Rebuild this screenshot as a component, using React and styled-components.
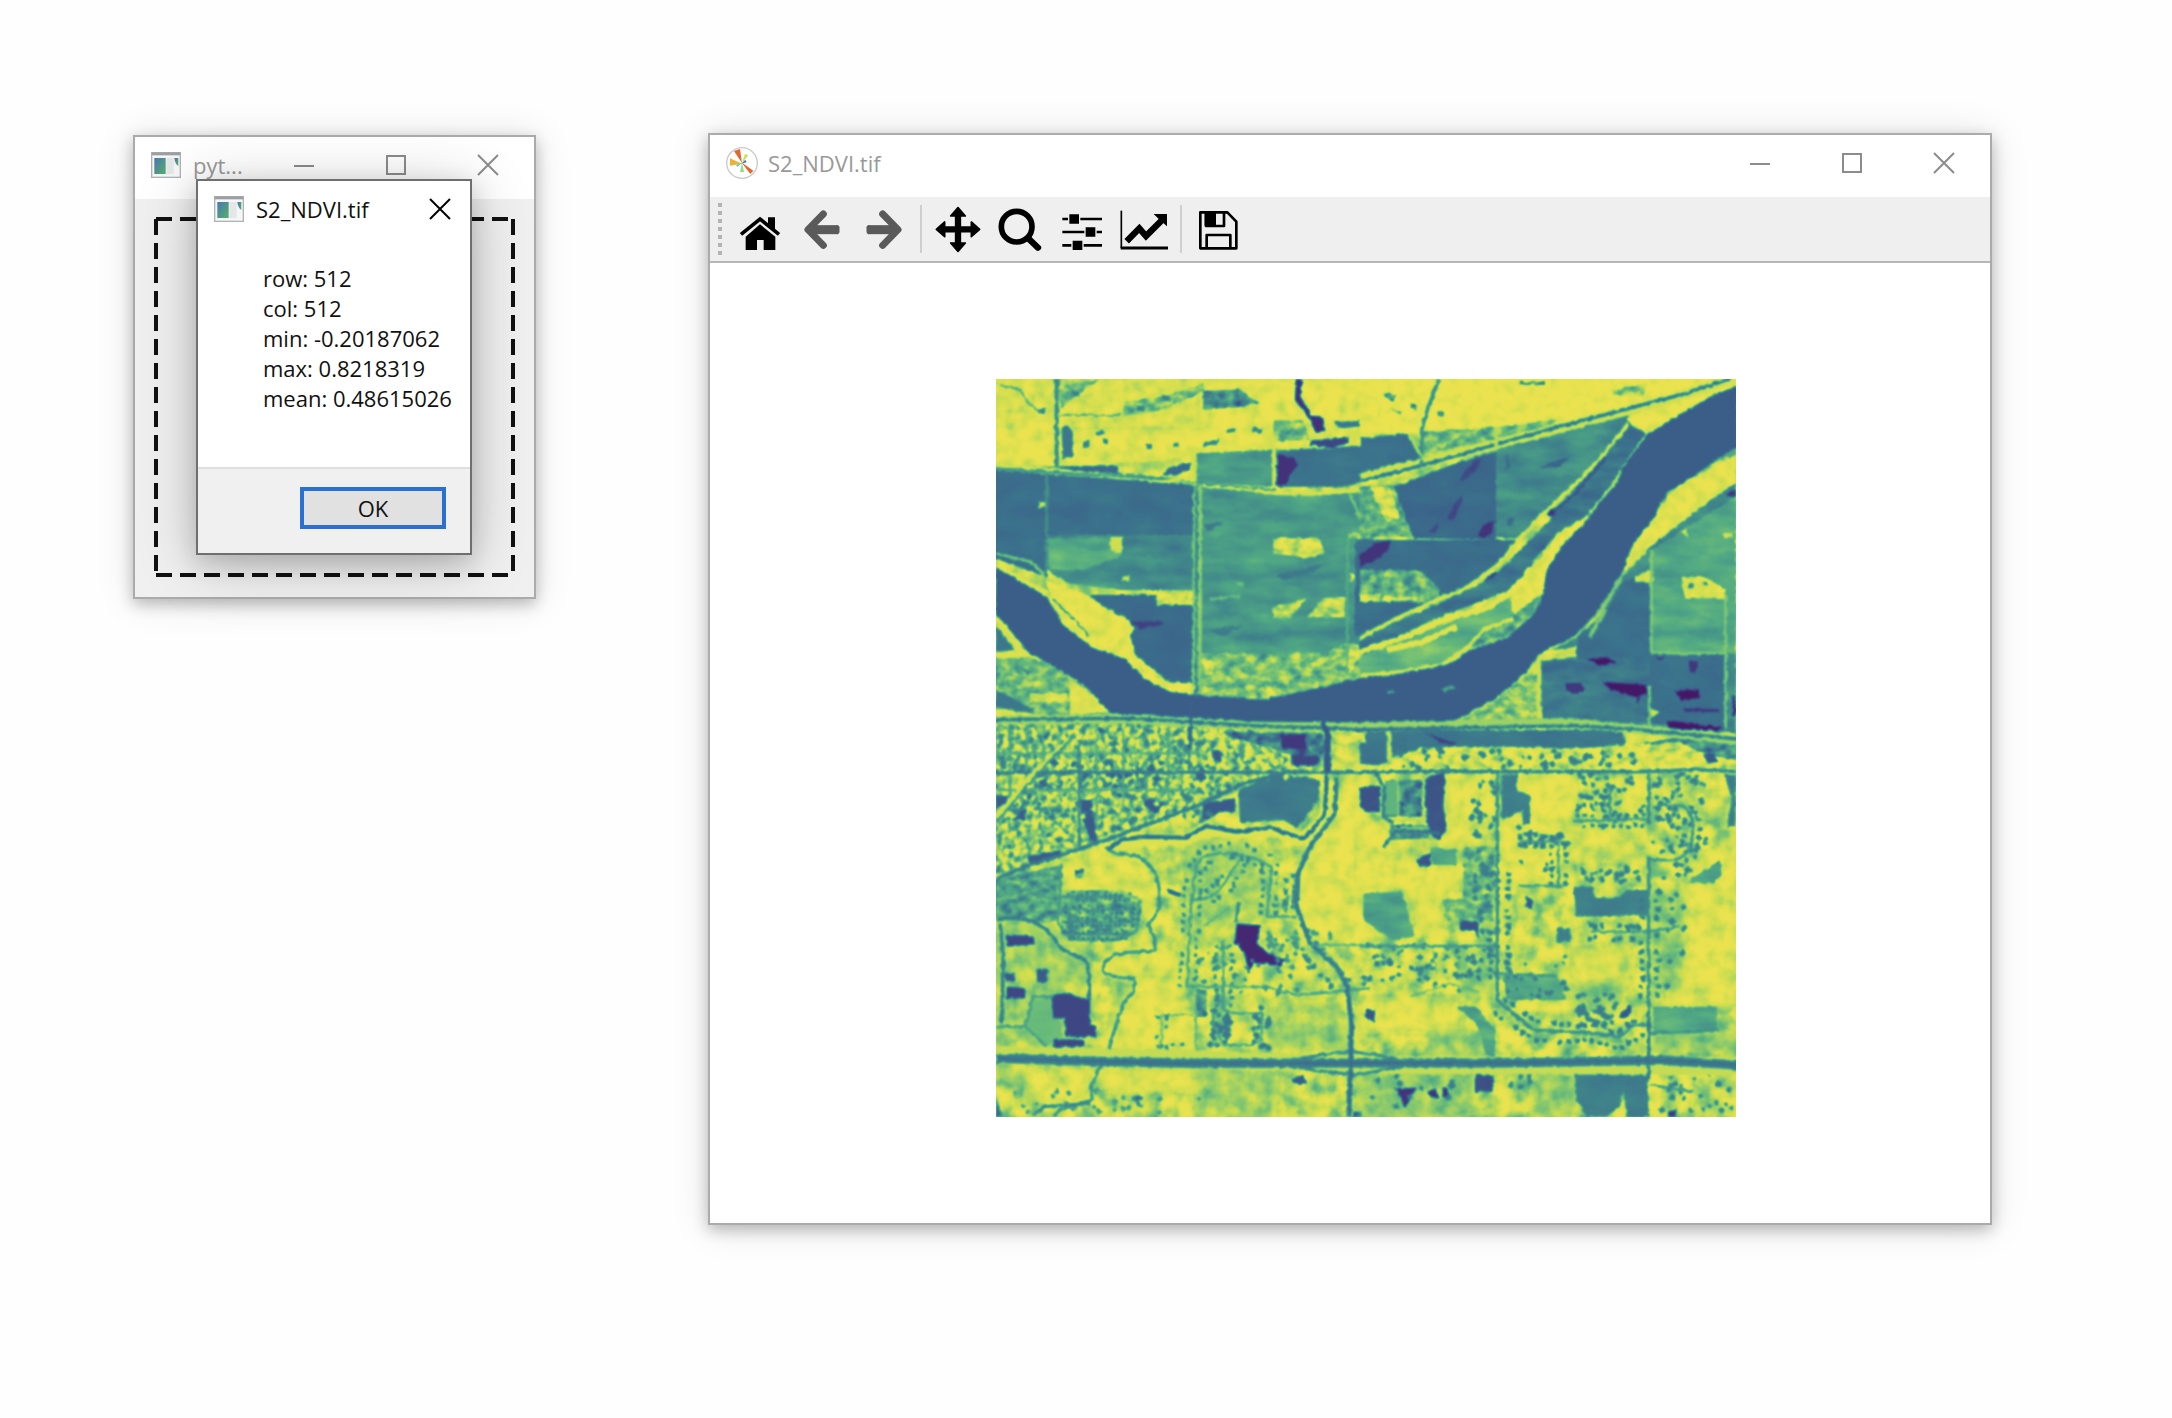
import React from "react";
import styled, { createGlobalStyle } from "styled-components";

const GlobalStyle = createGlobalStyle`
  *, *::before, *::after { box-sizing: border-box; }
  html, body { margin: 0; background: #fefefe; }
  body, button { font-family: "Open Sans", "Noto Sans", sans-serif; font-size: 22px; }
`;

/* ---------- window chrome ---------- */

const Desktop = styled.main`
  position: relative;
  min-height: 100vh;
  overflow: hidden;
`;

const Window = styled.section`
  position: absolute;
  display: flex;
  flex-direction: column;
  background: #fff;
  border: 2px solid ${(p) => (p.$active ? "#6f6f6f" : "#ababab")};
  box-shadow: ${(p) =>
    p.$active
      ? "0 8px 24px rgba(0, 0, 0, 0.18), 0 8px 60px rgba(0, 0, 0, 0.2)"
      : "0 5px 14px rgba(0, 0, 0, 0.24), 0 2px 36px rgba(0, 0, 0, 0.12)"};
`;

const DropWindow = styled(Window)`
  left: 133px;
  top: 135px;
  width: 403px;
  background: #f0f0f0;
`;

const FigureWindow = styled(Window)`
  left: 708px;
  right: 180px;
  top: 133px;
`;

const StatsDialog = styled(Window)`
  left: 196px;
  top: 179px;
  width: 276px;
`;

const TitleBar = styled.header`
  display: flex;
  align-items: center;
  height: 62px;
  padding: 0 0 6px 16px;
  background: #fff;
`;

const Title = styled.h1`
  flex: 1;
  min-width: 0;
  margin: 0 0 0 ${(p) => p.$gap}px;
  font-size: 22px;
  font-weight: 400;
  line-height: 30px;
  white-space: nowrap;
  color: ${(p) => (p.$active ? "#111" : "#999")};
`;

const ControlButton = styled.button`
  display: flex;
  align-items: center;
  justify-content: center;
  width: ${(p) => p.$width || 92}px;
  height: 56px;
  padding: 0;
  border: 0;
  background: transparent;
  color: ${(p) => (p.$active ? "#000" : "#8c8c8c")};
`;

const glyphs = {
  Minimize: "M0 11H20",
  Maximize: "M1 1H19V19H1Z",
  Close: "M0 0L20 20M20 0L0 20",
};

function Control({ name, active, width }) {
  return (
    <ControlButton type="button" aria-label={name} $active={active} $width={width}>
      <svg width="20" height="20" viewBox="0 0 20 20" overflow="visible">
        <path d={glyphs[name]} fill="none" stroke="currentColor" strokeWidth="2" />
      </svg>
    </ControlButton>
  );
}

function AppIcon() {
  return (
    <svg width="30" height="26" viewBox="0 0 90 78" aria-hidden="true">
      <defs>
        <linearGradient id="pane" x1="0" y1="0" x2="1" y2="1">
          <stop offset="0" stopColor="#4a78b0" />
          <stop offset="1" stopColor="#55b06a" />
        </linearGradient>
      </defs>
      <rect x="2" y="2" width="86" height="74" fill="#f6f6f6" stroke="#b0b3b6" strokeWidth="4" />
      <rect x="2" y="1" width="86" height="9" fill="#9ba0a5" />
      <rect x="10" y="18" width="34" height="48" fill="url(#pane)" />
      <rect x="46" y="18" width="22" height="48" fill="#e4e6e8" />
      <path d="M70 18H82V42Q72 36 70 18Z" fill="url(#pane)" />
    </svg>
  );
}

function PlotIcon() {
  return (
    <svg width="32" height="32" viewBox="0 0 96 96" aria-hidden="true">
      <circle cx="48" cy="48" r="46" fill="#fff" stroke="#c9c9c9" strokeWidth="4" />
      <path d="M48 48L24 12L42 6Z" fill="#e2672c" />
      <path d="M48 50L12 34V56Z" fill="#e9b33a" />
      <path d="M46 46L82 71L73 81Z" fill="#e2672c" />
      <path d="M48 48L57 20L67 25Z" fill="#c3e35a" />
      <path d="M48 48L42 75H54Z" fill="#8be084" />
      <path d="M48 48L30 54L34 60Z" fill="#63c9c0" />
      <path d="M46 50L58 38L62 46Z" fill="#5577a8" />
    </svg>
  );
}

/* ---------- drop window ---------- */

const DropArea = styled.div`
  padding: 18px 19px 20px;
`;

const DropFrame = styled.div`
  --h: repeating-linear-gradient(90deg, #111 0 16px, transparent 16px 24px);
  --v: repeating-linear-gradient(180deg, #111 0 16px, transparent 16px 24px);
  height: 360px;
  background:
    var(--h) 2px 0 / calc(100% - 2px) 4px no-repeat,
    var(--h) 2px 100% / calc(100% - 2px) 4px no-repeat,
    var(--v) 0 2px / 4px calc(100% - 4px) no-repeat,
    var(--v) 100% 2px / 4px calc(100% - 4px) no-repeat;
`;

/* ---------- dialog ---------- */

const Stats = styled.div`
  padding: 20px 0 54px 65px;
  line-height: 30px;
  color: #111;
  white-space: nowrap;
`;

const StatLine = styled.p`
  margin: 0;
`;

const DialogFooter = styled.footer`
  display: flex;
  justify-content: flex-end;
  padding: 18px 24px 24px;
  border-top: 2px solid #dfdfdf;
  background: #f0f0f0;
`;

const OkButton = styled.button`
  width: 146px;
  height: 42px;
  padding: 0;
  border: 4px solid #2a70d0;
  background: #e1e1e1;
  color: #111;
  line-height: 30px;
`;

/* ---------- toolbar ---------- */

const Toolbar = styled.div`
  display: flex;
  align-items: center;
  height: 66px;
  padding-left: 8px;
  border-bottom: 2px solid #b6b6b6;
  background: #efefef;
`;

const Grip = styled.span`
  width: 4px;
  height: 52px;
  margin-right: 7px;
  background: repeating-linear-gradient(180deg, #b4b4b4 0 4px, transparent 4px 8px);
`;

const ToolButton = styled.button`
  display: flex;
  justify-content: center;
  width: 62px;
  padding: 0;
  border: 0;
  background: transparent;
  color: ${(p) => (p.disabled ? "#5a5a5a" : "#000")};
`;

const Separator = styled.span`
  width: 2px;
  height: 48px;
  margin: 0 5px;
  background: #cfcfcf;
`;

const arrow = (
  <g fill="none" stroke="currentColor" strokeLinecap="round" strokeLinejoin="round">
    <path d="M76 27L30 74L76 121" strokeWidth="21" />
    <path d="M42 74H120" strokeWidth="27" strokeLinecap="butt" />
    <path d="M118 67V81" strokeWidth="13" />
  </g>
);

const toolIcons = {
  Home: (
    <g fill="currentColor">
      <path d="M29 95L72 58L118 95V135H83V105H63V135H29Z" />
      <path d="M15 87L72 41L129 87" fill="none" stroke="#efefef" strokeWidth="18" />
      <path d="M96 37H117V74L96 57Z" />
      <path d="M15 88L72 42L129 88" fill="none" stroke="currentColor" strokeWidth="11" />
    </g>
  ),
  Back: arrow,
  Forward: <g transform="translate(144 0) scale(-1 1)">{arrow}</g>,
  Pan: (
    <g fill="currentColor" stroke="currentColor" strokeLinejoin="round" strokeWidth="5">
      <path d="M72 8L94 33H79V66H112V51L137 73L112 95V80H79V114H94L72 139L50 114H65V80H32V95L7 73L32 51V66H65V33H50Z" />
    </g>
  ),
  Zoom: (
    <g fill="none" stroke="currentColor" strokeLinecap="round">
      <circle cx="62" cy="65" r="46" strokeWidth="17" />
      <path d="M98 101L126 128" strokeWidth="19" />
    </g>
  ),
  Subplots: (
    <g fill="currentColor">
      <path d="M13 38H30V46H13ZM67 38H132V46H67ZM13 77H79V85H13ZM116 77H132V85H116ZM13 117H40V125H13ZM77 117H132V125H77Z" />
      <path d="M34 28H63V56H34ZM83 67H112V95H83ZM44 107H73V135H44Z" />
    </g>
  ),
  Customize: (
    <g fill="none" stroke="currentColor">
      <path d="M4 17V129" strokeWidth="5" />
      <path d="M2 129H144" strokeWidth="9" />
      <path d="M20 109L58 70L78 93L124 47" strokeWidth="19" />
      <path d="M101 27H141V64L130 54L114 40Z" fill="currentColor" stroke="none" />
    </g>
  ),
  Save: (
    <g fill="none" stroke="currentColor" strokeWidth="8" strokeLinejoin="round">
      <path d="M19 22H100L127 50V130H19Z" />
      <path d="M36 22V63H90V22" />
      <path d="M36 22H62V60H36Z" fill="currentColor" />
      <path d="M38 130V90H109V130" />
    </g>
  ),
};

function Tool({ name, disabled }) {
  return (
    <ToolButton type="button" aria-label={name} disabled={disabled}>
      <svg width="48" height="48" viewBox="0 0 144 144">
        {toolIcons[name]}
      </svg>
    </ToolButton>
  );
}

/* ---------- raster ---------- */

const Canvas = styled.div`
  display: flex;
  justify-content: center;
  padding: 116px 0 106px 32px;
`;

const RasterSvg = styled.svg`
  display: block;
  width: 740px;
  max-width: 100%;
  height: auto;
`;

// Grey level for an index value between 0 and 1; the colour map is applied to the whole scene.
const g = (v) => {
  const n = Math.round(v * 255);
  return `rgb(${n},${n},${n})`;
};

const random = (seed) => () => {
  seed = (seed * 16807) % 2147483647;
  return seed / 2147483647;
};

// Small blobs (houses, trees) spread over a rectangle.
function scatter(seed, count, x, y, w, h, size) {
  const next = random(seed * 7919 + 13);
  let d = "";
  for (let i = 0; i < count; i++) {
    const px = Math.round(x + next() * w);
    const py = Math.round(y + next() * h);
    const a = Math.round(size * (0.6 + next() * 0.9));
    const b = Math.round(size * (0.5 + next() * 0.7));
    d += `M${px} ${py}l${a} ${-b}l${b} ${a}l${-a} ${b}Z`;
  }
  return d;
}

// Houses along both sides of a street given as points.
function street(seed, points, step = 24, off = 17, size = 10) {
  const next = random(seed * 104729 + 7);
  let d = "";
  for (let i = 0; i < points.length - 1; i++) {
    const [x1, y1] = points[i];
    const [x2, y2] = points[i + 1];
    const len = Math.hypot(x2 - x1, y2 - y1);
    const ux = (x2 - x1) / len;
    const uy = (y2 - y1) / len;
    for (let t = 0; t < len; t += step) {
      for (const side of [-1, 1]) {
        if (next() < 0.18) continue;
        const o = side * (off + next() * 8);
        const px = Math.round(x1 + ux * t - uy * o - size / 2);
        const py = Math.round(y1 + uy * t + ux * o - size / 2);
        d += `M${px} ${py}h${Math.round(size * (0.8 + next() * 0.7))}v${Math.round(size * (0.8 + next() * 0.6))}h${-size}Z`;
      }
    }
  }
  return d;
}

function Area({ v, d, rough }) {
  return <path d={d} fill={g(v)} filter={rough ? `url(#${rough})` : undefined} />;
}

function Line({ v, d, w = 8 }) {
  return <path d={d} fill="none" stroke={g(v)} strokeWidth={w} strokeLinejoin="round" />;
}

function Noise({ id, freq, k, seed, octaves = 3, soft = 0 }) {
  return (
    <filter id={id} x="-0.05" y="-0.05" width="1.1" height="1.1" colorInterpolationFilters="sRGB">
      <feTurbulence type="fractalNoise" baseFrequency={freq} numOctaves={octaves} seed={seed} />
      <feColorMatrix values="1 0 0 0 0 1 0 0 0 0 1 0 0 0 0 0 0 0 0 1" result="n" />
      <feFlood floodColor="#000" result="black" />
      <feColorMatrix in="SourceGraphic" values="1 0 0 0 0 0 1 0 0 0 0 0 1 0 0 0 0 0 0 1" result="s" />
      <feMorphology in="SourceGraphic" operator="dilate" radius="12" result="wide" />
      <feComposite in="wide" in2="n" operator="arithmetic" k2="1" k3={k} k4={-k / 2} />
      <feColorMatrix values="1 0 0 0 0 0 1 0 0 0 0 0 1 0 0 0 0 0 0 1" result="t" />
      <feGaussianBlur in="SourceAlpha" stdDeviation={soft} result="mask" />
      <feComposite in="t" in2="mask" operator="in" />
    </filter>
  );
}

function NorthWest() {
  return (
    <g transform="translate(-18 -27)">
      <Area v={0.93} d="M0 20H1150V240L860 235L440 275L200 290L0 280Z" rough="grass" />
      <Area v={0.98} d="M200 190H840V225L600 250L400 270L230 285Z M0 140H190V275L0 270Z M640 30H1140V150H850L640 200Z" rough="lawn" />
      <Area v={0.7} d="M200 30L330 30L260 75L215 120Z M400 95L520 80L640 40V65L520 120L400 140Z M850 150H940L960 210L850 215Z" rough="mottle" />
      <Area v={0.52} d="M640 62L750 58L810 100L740 112L640 120Z" rough="mottle" />
      <Area v={0.42} d="M215 170L235 165L248 190V265H218Z" />
      <Area v={0.45} d="M245 60l20 5l5 14l-20 -3Z M315 185l20-6l8 12l-22 8Z M336 205l18 2l0 16l-18 0Z M280 215l18-4l0 18l-20 6Z M468 222h18v15h-18Z M550 218h16v12h-16Z M790 172l24 4l0 14l-24-4Z M712 178l26-3l-4 10l-22 4Z M140 115h25v15h-20Z M440 108h24v16h-24Z M515 75l24 4l-4 14l-18-2Z M640 215l50-8l-10 16l-40 6Z" />
      <Line v={0.6} d="M30 45L90 60L120 105L150 122M210 135H390" w={6} />
      <Line v={0.48} d="M200 27V290" w={12} />
      <Area v={0.12} d="M918 27L938 30L930 80L965 135L1000 145L1005 185L978 188L955 140L915 90Z" />
      <Area v={0.22} d="M960 212L1076 202V218L1030 232L960 226Z" />
      <Area v={0.42} d="M1030 155L1122 153V168L1050 175Z" />

      <Area v={0.55} d="M0 290H380V305L620 335V250L860 238V350L640 340L0 300Z" rough="field" />
      <Area v={0.36} d="M205 290L385 285V308L220 300Z M515 315L540 290L600 278V300L560 315Z" />
      <Area v={0.4} d="M860 242L1150 225V330L1060 350H860Z" rough="calm" />
      <Area v={0.13} d="M862 250L910 265L925 285L905 305L885 345H862Z" />
      <Area v={0.39} d="M0 300L620 345V520H170V620L0 560Z" rough="calm" />
      <Area v={0.5} d="M170 495H620V660H390L240 640L170 600Z" rough="field" />
      <Area v={0.63} d="M170 505H390V560L280 600H180Z" rough="field" />
      <Area v={0.9} d="M362 500H396V552L360 540Z M145 396H168V412H145Z M395 616H418V634H395Z" />
      <Area v={0.55} d="M635 345L850 370H1150V1000H635Z" rough="field" />
      <Area v={0.37} d="M300 675H500V705H612V940L540 940L430 850L380 750Z" rough="calm" />
      <Area v={0.2} d="M420 755L510 752L525 764L450 778Z" />
      <Area v={0.93} d="M502 670H618V705H502Z M850 505L985 505L1005 545L960 565L850 550Z M1075 490H1140V503H1075Z M1080 610H1112V632H1080Z" rough="mottle" />
      <Area v={0.84} d="M1000 685L1065 680V742H950Z M850 712L950 685L900 748L850 745Z" rough="mottle" />
      <Area v={0.42} d="M860 615L1010 580L960 610L880 630Z M650 780L760 765L700 800Z M640 465L700 455L650 490Z" rough="calm" />
      <Area v={0.7} d="M740 635h20v14h-20Z M660 685l90-12v8l-90 12Z" />
      <Area v={0.72} d="M625 850L1000 850L1070 820L1140 825V920L1000 955L820 990H620Z" rough="mottle" />
      <Area v={0.92} d="M640 870L672 880L668 915L645 915Z M800 960L830 940L860 975L820 985Z M960 880L1060 835L1060 855L970 895Z M1065 820L1140 830L1110 850L1080 910Z" rough="mottle" />

      <Area v={0.97} d="M170 635L290 675L320 700L410 745L435 775L420 790L435 855L500 925L600 945V975L540 965L460 925L400 865L310 835L215 760Z" rough="grass" />
      <Line v={0.5} d="M190 690L250 745L300 800" w={6} />
      <Area v={0.7} d="M0 860L100 850L190 890L280 950L360 1030L0 1050Z" rough="mottle" />
      <Area v={0.93} d="M240 930L290 960L360 1025L240 1035Z M0 1015L120 1030L240 1040L0 1050Z M120 970H230V995H120Z" rough="grass" />
      <Area v={0.42} d="M18 960L60 980L130 1020L90 1025L18 1010Z M95 895L125 905L110 915Z M18 770L75 840L18 845Z" />

      <Line v={0.92} d="M0 287L210 300L520 335L600 325" w={9} />
      <Line v={0.9} d="M385 285L405 315M612 255V325M852 240V350" w={12} />
      <Line v={0.92} d="M630 345L780 358L860 370L960 372L1060 365L1140 345" w={11} />
      <Line v={0.5} d="M620 340L860 360M0 293L520 328" w={5} />
      <Line v={0.52} d="M170 310V600" w={9} />
      <Line v={0.76} d="M613 345L610 950M631 345L628 975" w={8} />
      <Line v={0.45} d="M622 345L618 975" w={7} />
      <Line v={0.75} d="M18 550L120 575L160 610L170 650M1078 370L1115 455" w={9} />
      <Line v={0.64} d="M1072 500V910" w={7} />
      <Line v={0.95} d="M18 735L60 780L90 840L150 865M18 858L110 852M18 592L170 670" w={16} />
    </g>
  );
}

function NorthEast() {
  return (
    <g transform="translate(1092 -27)">
      <Area v={1} d="M0 20H1150V60L800 130L400 190H0Z" rough="grass" />
      <Area v={0.5} d="M70 65L110 75L100 95L75 85Z M232 124h20v15h-20Z M85 115l40 10l-5 8Z M150 100l20 5l0 18l-18-8Z M480 35H555V45H480Z" rough="mottle" />
      <Area v={0.76} d="M755 60L860 40L850 80L760 75Z" rough="mottle" />
      <Area v={0.7} d="M180 185L400 172L590 148L580 165L420 210L190 250Z" rough="mottle" />
      <Area v={0.4} d="M0 205L140 190L180 235V285L0 330Z" rough="calm" />
      <Area v={0.36} d="M100 350L300 275L410 245V510L160 505Z" rough="calm" />
      <Area v={0.5} d="M410 235L800 130L820 160L540 440L480 505H410Z" rough="field" />
      <Area v={0.38} d="M-15 510H480L360 630L240 680L-15 800Z" rough="calm" />
      <Area v={0.66} d="M0 600H180L240 660V700L100 695H0Z M0 350L100 345L155 500H0Z" rough="mottle" />
      <Area v={0.94} d="M30 350L90 350L120 440L80 460Z M0 675L60 670V695H0Z M70 680H170V692H70Z" rough="mottle" />
      <Area v={0.14} d="M0 555L45 520L95 510L80 545L40 575L0 590Z M352 495L375 462L402 455L395 490L370 505Z M565 420L590 415L585 440L565 438Z M365 640L395 610L412 605L408 630Z" />
      <Area v={0.24} d="M300 325L340 275L365 265L345 305L305 335Z M265 440L300 375L312 385L275 455Z M205 485L235 460L230 490Z" rough="calm" />
      <Area v={0.36} d="M540 295L585 270L625 262L600 290Z M440 245L450 290L435 300Z M445 440l20 5l-10 25l-15-5Z" rough="calm" />
      <Area v={0.42} d="M800 160L860 190L760 345L690 440L590 490L450 660L240 740L0 850V800L240 700L400 620L560 460Z" rough="field" />
      <Area v={0.68} d="M0 860L260 760L450 670L460 740L330 835L240 890L0 920Z" rough="field" />
      <Area v={0.98} d="M795 150L870 95L1127 35V52L1060 75L950 135L865 190Z" rough="grass" />
      <Area v={0.97} d="M460 735L470 690L440 665L560 545L590 490L650 455L700 425L600 535L570 600L545 680L510 705Z" rough="grass" />
      <Area v={0.62} d="M490 715L545 670L540 710L450 800L370 825L330 835L400 770Z" rough="mottle" />
      <Area v={0.5} d="M1127 340L1000 420L870 530L790 620L720 740L650 800L545 855V1060L1127 1100Z" rough="field" />
      <Area v={0.39} d="M790 630L872 620V850H1095V1090L870 1060V870H650L650 800L730 740Z" rough="calm" />
      <Area v={0.43} d="M545 870H650L870 860V1060L545 1055Z" rough="field" />
      <Area v={0.62} d="M875 540L1127 380V850H880Z" rough="field" />
      <Area v={0.93} d="M965 620L1030 618L1095 660V685H975Z M825 618L870 600L885 635L825 636Z M960 485L980 475L985 500Z M1090 490H1115V505H1090Z M870 1015L900 1025L875 1045Z" rough="grass" />
      <Area v={0.45} d="M985 640h16v14h-16Z M1030 636h14v10h-14Z" />
      <Area v={0.97} d="M1127 258L1050 295L925 375L880 445L815 525L790 605L870 530L960 460L1080 370L1127 335Z" rough="grass" />
      <Area v={0.04} d="M730 935L860 945L862 975L820 980L750 960Z M920 1050L1000 1060L1085 1072L1080 1090L925 1075Z M680 865L740 862L770 878L720 888Z M945 962L1015 958L1020 985L960 990Z M1118 980H1127V1035H1118Z" />
      <Area v={0.16} d="M615 940L665 938L675 960L650 972L620 962Z M985 870L1015 875L1005 910L990 905Z M970 1015L1080 1018V1026H980Z M825 980L840 975L835 1000Z M885 860L915 862L905 870Z M1100 365L1127 360V380L1100 378Z" />
      <Area v={0.76} d="M530 880L550 1060H270L400 995L500 905Z" rough="mottle" />
      <Area v={0.93} d="M435 970L500 1000L470 1005Z M545 845L650 830V860L540 870Z" rough="grass" />

      <Line v={0.9} d="M0 325L180 280L560 185L800 122L940 85L1100 32" w={30} />
      <Line v={0.38} d="M0 333L180 288L350 240L560 180L800 117L960 75L1110 27" w={9} />
      <Line v={0.5} d="M238 27L205 110L185 180V290" w={11} />
      <Line v={0.85} d="M410 170V240M150 200L190 270" w={10} />
      <Line v={0.92} d="M805 160L730 255L650 340L540 440L470 515L420 580L310 660L240 685L120 740L0 805" w={11} />
      <Line v={0.28} d="M740 260L640 375L580 425" w={9} />
      <Line v={0.88} d="M862 190L800 280L760 345L690 430" w={10} />
      <Line v={0.97} d="M450 670L380 715L260 745L150 795L0 845M290 770L190 815L80 840" w={16} />
      <Line v={0.92} d="M0 918L130 905L250 885L320 835L370 780L460 745" w={12} />
      <Line v={0.9} d="M535 855V1060" w={12} />
      <Line v={0.76} d="M874 540V850H1095M1097 670V1095M868 950V1075" w={9} />
      <Line v={0.75} d="M790 605L740 690L650 790M735 720L690 800" w={13} />
      <Line v={0.9} d="M270 1058L400 990L450 945L525 890L545 850" w={10} />
    </g>
  );
}

const riverPath =
  "M0 565L152 653L197 733L292 808L382 838L452 903L522 938L592 948L802 963L982 923L1092 898L1222 883L1352 858L1422 813L1532 778L1612 708L1637 663L1652 573L1692 508L1782 413L1822 358L1862 313L1882 263L1952 168L2042 113L2152 48L2225 20V203L2142 258L2012 343L1972 418L1907 503L1882 573L1832 653L1792 713L1732 773L1632 823L1592 878L1492 963L1362 1033L1092 1041L832 1040L602 1030L342 1002L272 923L182 868L102 823L0 706Z";

function SouthWest() {
  return (
    <g transform="translate(-18 1083)">
      <Area v={0.76} d="M0 -65L600 -50L1000 -30V90L900 100L640 190L350 300L0 420Z" rough="town" />
      <Area v={0.96} d="M1060 120L1140 100V600L980 600L930 500L920 400L990 300Z" rough="lawn" />
      <Area v={0.95} d="M220 380L360 345L460 370L490 430L480 540L400 460H240Z M340 640L520 600L600 740L500 790L380 900L420 780L430 720L345 700Z M380 780H600V930H360Z M110 990H300V1080H110Z M330 990H620V1050H330Z" rough="lawn" />
      <Area v={0.6} d="M0 420L210 375V540L160 550L90 530L0 540Z" rough="mottle" />
      <Area v={0.8} d="M600 300L740 290L850 370L840 530L740 520L600 640Z M20 560H180L290 650V900L170 920L20 860Z" rough="lawn" />
      <Area v={0.66} d="M210 450H400L460 480L440 580L380 600H240L205 540Z" rough="mottle" />
      <Area v={0.7} d="M120 780L190 770L220 885L170 920L110 860Z" rough="calm" />
      <Area v={0.43} d="M745 150L850 105L930 108L990 120L985 180L940 240L920 265L880 240L750 248Z" rough="calm" />
      <Area v={0.22} d="M880 -10H985V78L905 75V30H880Z M185 765L225 760L300 780V850L318 860V890H225V835H190Z M188 898L280 900V920H188Z M50 585L132 588V612L50 620Z M50 740L105 745V775H50Z" />
      <Area v={0.09} d="M740 552L812 556L800 610L830 640L882 660L875 678L820 668L790 672L775 700L765 640L735 610Z" />
      <Area v={0.3} d="M340 100L470 90L480 110L400 112L340 145Z M460 175L525 185L500 222L470 205Z M640 190L735 175V215H690L650 240L635 235Z M18 165L60 170L40 205L18 205Z M270 180L305 180L320 290L300 300L280 240Z M112 350L210 330L215 345L170 365L120 375Z M65 240L110 200L105 240Z M530 445L575 460L570 470L535 460Z M905 1020L935 1003L952 1030L930 1035Z M140 690H172V725H142Z M45 700H75V725H45Z M1115 140L1140 150V220L1115 190Z M1115 820H1140V840L1120 838Z M430 1068L458 1070L455 1080H430Z M665 35L690 30L695 65L670 60Z M1090 1115H1115V1130H1090Z" />
      <Area v={0.5} d="M340 60H370V90H340Z M885 470L900 465L890 525L875 500Z M255 390L280 385L275 420L255 410Z M18 1070L40 1130H18Z M620 750H650V830H620Z" rough="mottle" />
      <Area v={0.8} d="M620 990L850 985V1130H640Z M20 985L110 990L100 1040L20 1010Z M850 790H1060V930H850Z" rough="lawn" />

      <path d={scatter(3, 170, 20, -60, 660, 300, 10)} fill={g(0.45)} />
      <path d={scatter(4, 120, 20, -50, 900, 170, 10)} fill={g(0.94)} />
      <path d={scatter(5, 80, 20, 60, 600, 190, 11)} fill={g(0.94)} />
      <path d={scatter(6, 46, 600, 600, 360, 170, 8)} fill={g(0.5)} />
      <path d={scatter(8, 22, 20, 1050, 600, 70, 9)} fill={g(0.55)} />
      <path d={scatter(9, 30, 650, 810, 60, 110, 10) + scatter(29, 18, 780, 800, 50, 120, 10)} fill={g(0.42)} />
      <path d={scatter(10, 30, 820, 570, 200, 60, 9)} fill={g(0.55)} />
      <path d={scatter(21, 14, 60, 20, 600, 160, 14)} fill={g(0.34)} />

      <Line v={0.6} d="M60 -50V190M110 -50V150M160 -50V100M320 -50V270M400 -30V200M535 -40V180M20 40H600M20 150H600M470 60V180" w={7} />
      <Line v={0.46} d="M268 0V330M598 -75V90" w={8} />
      <Line v={0.42} d="M0 97H1140" w={9} />
      <Line v={0.9} d="M20 230L130 100L240 0" w={14} />
      <Line v={0.5} d="M20 245L140 105L250 -10" w={7} />
      <Line v={0.43} d="M20 415L120 375L350 300L640 190L760 130L900 97" w={11} />
      <Line v={0.95} d="M350 325L470 300L590 300L640 268L740 280L850 270L930 300L1000 240L1020 150" w={34} />
      <Line v={0.36} d="M350 330L400 298L470 290L585 293L650 258L740 275L840 262L935 295L965 275L1005 220L1010 120L1005 20L1012 -40" w={12} />
      <Line v={0.42} d="M1040 110L1035 220L960 320L925 400L920 500L960 610L1040 680L1072 740L1085 860L1075 1130" w={13} />
      <Line v={0.5} d="M350 320Q360 345 430 345Q500 370 508 450Q515 520 475 550L495 600V632L400 638Q340 650 340 690Q350 712 430 715Q450 740 400 790L370 880L345 960L305 1030V1080L210 1110L190 1130" w={9} />
      <Line v={0.42} d="M18 540Q110 520 170 570L220 630L285 660Q300 680 298 780M30 550L40 640L35 850" w={10} />
      <Line v={0.55} d="M215 370L205 550L240 600H390L440 570L450 480" w={8} />
      <Line v={0.5} d="M215 470H400M215 508H440M215 546H430M220 582H420" w={7} />
      <Line v={0.55} d="M190 770H130L105 860L170 920M20 860H100" w={8} />
      <Line v={0.55} d="M610 480Q605 380 640 350Q740 320 845 380L830 530H920M610 480Q660 480 690 450L760 340M605 460L590 740H830L920 765L1140 745M700 600V810L740 820H815V900L790 915H700L670 850V815" w={7} />
      <Line v={0.66} d="M618 745V930M512 825H610M515 825V920M960 615H1140M640 560L720 500" w={6} />
      <Line v={0.45} d="M140 1120L165 1095M160 1100L300 1090M745 490L740 545M430 1070L455 1100" w={9} />
      <path
        d={
          street(1, [[605, 470], [612, 390], [650, 345], [740, 325], [840, 375], [832, 520]]) +
          street(2, [[640, 480], [700, 440], [765, 335]], 22, 18, 11) +
          street(3, [[605, 500], [592, 740]], 24, 18, 10) +
          street(4, [[700, 620], [700, 800]], 22, 20, 11) +
          street(5, [[900, 390], [895, 510]], 16, 8, 13) +
          street(6, [[960, 630], [1060, 740]], 20, 20, 13) +
          street(7, [[512, 830], [515, 930], [600, 930]], 30, 10, 10)
        }
        fill={g(0.45)}
      />
      <path d={street(8, [[235, 470], [430, 470]], 14, 5, 8) + street(9, [[225, 508], [440, 508], [430, 546], [225, 546], [225, 585], [420, 585]], 14, 5, 8)} fill={g(0.42)} />
    </g>
  );
}

function SouthEast() {
  return (
    <g transform="translate(1092 1083)">
      <Area v={0.42} d="M0 -30H1127V10L940 5L800 20L640 25L450 20H260L90 50V75H0Z" rough="calm" />
      <Area v={0.92} d="M780 -45L1127 -20V-5L940 -5L800 20Z M80 -30H95V75H80Z" rough="grass" />
      <Area v={0.2} d="M200 -20L285 10L290 18L240 8Z" />
      <Area v={0.92} d="M60 75L180 25L400 22L640 28L830 10L1040 40L1127 60V95H60Z" rough="mottle" />
      <Area v={0.5} d="M940 -10L1127 10V60L1040 45L990 25Z" rough="mottle" />
      <Area v={0.96} d="M260 110H390V250L300 320H260Z M130 400L300 380L240 480L235 570L180 580Z M420 240H630V430H430Z M480 100H640V260H520Z M970 430L1127 270V800H940L920 700L970 600Z M0 240L60 250L180 390L130 450H0Z M0 780H300V870H0Z M780 110H860V220H780Z" rough="lawn" />
      <Area v={0.9} d="M640 250H850V360H640Z M640 620L800 620V730H650Z" rough="lawn" />
      <Area v={0.76} d="M870 450H970V740H870Z M300 620H410V760H300Z M880 880H1127V930H880Z M0 985H340V1130H0Z M520 985H645V1130H520Z M200 870H400V950H200Z M640 740L780 730L790 790L640 800Z" rough="lawn" />
      <Area v={0.6} d="M10 460L125 455L165 590L100 600L10 540Z M430 705L590 705L620 780H440Z M290 800L350 800L405 870V950H380L350 850Z M215 320L290 330V375H215Z M975 430L1080 360L1085 405L1060 430Z M880 800H1070V870L1020 880H880Z" rough="field" />
      <Area v={0.68} d="M250 480L400 470V540L260 550Z M310 320H405V470H310Z" rough="mottle" />
      <Area v={0.45} d="M425 105L472 100L470 155L510 165V255H488V210L425 240Z M640 440H700L705 475L780 470L800 450H865V525L650 530Z M645 995H865V1130H800L790 1050L780 1100L740 1130H680L650 1080Z M590 565H630V605H590Z M1095 105H1127V255L1100 262L1115 180Z" rough="calm" />
      <Area v={0.27} d="M0 140L60 140V215H20L0 200Z M200 115L255 95L250 200L260 260L240 300L205 280L195 180Z M165 360L215 335L210 375L180 380Z M300 545H355V600L340 570H300Z M345 1003L400 1005V1055H345Z M500 470L518 480L515 505L498 500Z M776 830L805 795L818 800L810 825L785 838Z M1030 45L1060 40L1075 65L1045 70Z M15 810H45V850L15 830Z" rough="calm" />
      <Area v={0.14} d="M105 1045H170L150 1070L135 1105L125 1075Z M205 1055L225 1045L235 1075L215 1075Z M248 1042L262 1045L265 1075L250 1070Z M925 1115L950 1110L945 1130H925Z" />
      <Area v={0.48} d="M75 120H185V230H75Z M90 255H205V295L90 300Z" rough="mottle" />
      <Area v={0.66} d="M78 125H112V225H78Z" />
      <Line v={0.82} d="M80 240H200M100 265H210M115 120V230M190 120V235" w={6} />

      <path
        d={
          scatter(11, 34, 640, 100, 220, 160, 9) +
          scatter(12, 60, 870, 100, 160, 240, 9) +
          scatter(13, 22, 320, 120, 90, 170, 10) +
          scatter(14, 34, 320, 320, 90, 380, 10) +
          scatter(15, 38, 640, 760, 120, 100, 10) +
          scatter(16, 22, 430, 640, 180, 140, 9) +
          scatter(17, 38, 0, 610, 330, 150, 9) +
          scatter(18, 24, 640, 380, 190, 50, 10) +
          scatter(19, 50, 100, 30, 720, 55, 10) +
          scatter(20, 22, 870, 1000, 240, 110, 9) +
          scatter(22, 18, 880, 350, 90, 400, 10) +
          scatter(23, 10, 10, 1000, 300, 110, 11) +
          scatter(25, 10, 430, 995, 80, 45, 9) +
          scatter(26, 12, 430, 250, 200, 220, 10)
        }
        fill={g(0.44)}
      />
      <path
        d={
          street(11, [[655, 183], [750, 180]], 18, 8, 11) +
          street(12, [[752, 150], [752, 240]], 20, 16, 11) +
          street(13, [[650, 242], [850, 240]], 22, 12, 10) +
          street(14, [[480, 300], [620, 300]], 16, 9, 14) +
          street(15, [[595, 320], [595, 440]], 22, 18, 11) +
          street(16, [[414, 380], [414, 680]], 22, 24, 12) +
          street(17, [[690, 575], [850, 578]], 18, 14, 13) +
          street(18, [[420, 800], [530, 875], [700, 880], [770, 900], [850, 855]], 24, 20, 12) +
          street(19, [[890, 195], [960, 195], [995, 240], [990, 330], [940, 360]], 24, 18, 11) +
          street(20, [[866, 480], [866, 780]], 26, 20, 12) +
          street(24, [[20, 640], [400, 690]], 34, 20, 12)
        }
        fill={g(0.42)}
      />

      <Line v={0.44} d="M0 95H860L1000 88L1127 95" w={10} />
      <Line v={0.48} d="M412 95V780L520 870L700 880L780 890L820 855H866M866 95V240M866 350V1000" w={9} />
      <Line v={0.52} d="M0 618H412M415 700L590 708M475 438H610M640 243L860 238M750 130V240M595 310V440M690 575H860L960 560M480 305H600" w={7} />
      <Line v={0.5} d="M890 195H960Q1000 210 998 270Q1000 360 930 360H866M870 1035L1000 1055M870 880L1080 870" w={8} />
      <Line v={0.42} d="M45 90L70 140V230L100 250M70 320L110 270L240 280" w={9} />
      <Line v={0.66} d="M220 630L230 700M290 640L300 690M150 770L270 730L360 760" w={6} />
    </g>
  );
}

function Highway() {
  return (
    <g>
      <Line v={0.88} d="M0 2028L600 2040L1092 2058L2220 2062" w={54} />
      <Line v={0.44} d="M0 2038L350 2048L600 2053L1092 2052L1500 2052L2000 2044L2225 2058" w={27} />
      <Line v={0.38} d="M0 2038L350 2048L600 2053L1092 2052L1500 2052L2000 2044L2225 2058" w={6} />
      <Line v={0.46} d="M860 2048L1000 2024L1070 2018L1150 2030L1240 2048M860 2058L1000 2080L1090 2086L1220 2062" w={8} />
      <Line v={0.38} d="M1054 1823L1067 1943L1060 2214" w={12} />
      <Line v={0.4} d="M1958 1900V2100" w={9} />
    </g>
  );
}

function Riverside() {
  return (
    <g>
      <Area v={0.31} d={riverPath} />
      <Area v={0.6} d="M1335 928L1372 918L1378 928L1345 938ZM1175 935H1195V942H1175Z" />
      <Area v={0.6} d="M2150 245L2220 208V228L2160 248Z" />
      <Line v={0.8} d="M0 1024L400 1020L800 1042L1092 1044L1720 1030L1900 1048L2225 1085" w={28} />
      <Line v={0.4} d="M0 1022L400 1018L800 1042L970 1046L1092 1052L1740 1040L1900 1050L2225 1080" w={9} />
      <Area v={0.42} d="M680 1058L980 1062V1130L900 1130L700 1070Z" rough="mottle" />
      <Area v={0.16} d="M850 1068L930 1066V1110H860Z" />
      <Area v={0.9} d="M1000 1062L1110 1058V1090L1010 1100Z" rough="mottle" />
      <Line v={0.28} d="M978 1030L996 1060V1180" w={15} />
      <Line v={0.32} d="M588 950L582 1110" w={8} />
    </g>
  );
}

function NdviRaster() {
  return (
    <RasterSvg viewBox="0 0 2220 2214" role="img" aria-label="S2_NDVI.tif">
      <defs>
        <Noise id="grass" freq="0.03" k={0.3} seed={4} />
        <Noise id="lawn" freq="0.022" k={0.42} seed={8} octaves={4} soft={9} />
        <Noise id="mottle" freq="0.03 0.045" k={0.75} seed={9} octaves={3} />
        <Noise id="town" freq="0.055" k={1.4} seed={17} octaves={2} />
        <Noise id="field" freq="0.008 0.022" k={0.26} seed={23} octaves={4} />
        <Noise id="calm" freq="0.01 0.02" k={0.09} seed={31} />
        <Noise id="country" freq="0.02" k={0.7} seed={41} octaves={4} />
        <filter id="viridis" x="0" y="0" width="1" height="1" colorInterpolationFilters="sRGB">
          <feTurbulence type="fractalNoise" baseFrequency="0.06" numOctaves="2" seed="5" result="warp" />
          <feDisplacementMap in="SourceGraphic" in2="warp" scale="12" xChannelSelector="R" yChannelSelector="G" />
          <feGaussianBlur stdDeviation="3" />
          <feColorMatrix values="1 0 0 0 0 0 1 0 0 0 0 0 1 0 0 0 0 0 0 1" />
          <feComponentTransfer>
            <feFuncR type="table" tableValues=".26 .27 .25 .235 .235 .26 .31 .42 .62 .81 .92" />
            <feFuncG type="table" tableValues=".05 .17 .26 .36 .45 .55 .65 .74 .82 .87 .89" />
            <feFuncB type="table" tableValues=".36 .46 .51 .54 .55 .54 .52 .47 .39 .31 .31" />
          </feComponentTransfer>
        </filter>
        <clipPath id="extent">
          <rect width="2220" height="2214" />
        </clipPath>
      </defs>
      <g clipPath="url(#extent)">
        <g filter="url(#viridis)">
          <rect x="-30" y="-30" width="2280" height="2274" fill={g(0.87)} filter="url(#country)" />
          <NorthWest />
          <NorthEast />
          <SouthWest />
          <SouthEast />
          <Riverside />
          <Highway />
        </g>
      </g>
    </RasterSvg>
  );
}

const stats = ["row: 512", "col: 512", "min: -0.20187062", "max: 0.8218319", "mean: 0.48615026"];

export default function App() {
  return (
    <>
      <GlobalStyle />
      <Desktop>
        <DropWindow>
          <TitleBar>
            <AppIcon />
            <Title $gap={12}>pyt...</Title>
            <Control name="Minimize" />
            <Control name="Maximize" />
            <Control name="Close" />
          </TitleBar>
          <DropArea>
            <DropFrame />
          </DropArea>
        </DropWindow>

        <FigureWindow>
          <TitleBar>
            <PlotIcon />
            <Title $gap={10}>S2_NDVI.tif</Title>
            <Control name="Minimize" />
            <Control name="Maximize" />
            <Control name="Close" />
          </TitleBar>
          <Toolbar role="toolbar">
            <Grip />
            <Tool name="Home" />
            <Tool name="Back" disabled />
            <Tool name="Forward" disabled />
            <Separator />
            <Tool name="Pan" />
            <Tool name="Zoom" />
            <Tool name="Subplots" />
            <Tool name="Customize" />
            <Separator />
            <Tool name="Save" />
          </Toolbar>
          <Canvas>
            <NdviRaster />
          </Canvas>
        </FigureWindow>

        <StatsDialog as="div" role="dialog" aria-label="S2_NDVI.tif" $active>
          <TitleBar>
            <AppIcon />
            <Title $gap={12} $active>
              S2_NDVI.tif
            </Title>
            <Control name="Close" active width={60} />
          </TitleBar>
          <Stats>
            {stats.map((s) => (
              <StatLine key={s}>{s}</StatLine>
            ))}
          </Stats>
          <DialogFooter>
            <OkButton type="button">OK</OkButton>
          </DialogFooter>
        </StatsDialog>
      </Desktop>
    </>
  );
}
